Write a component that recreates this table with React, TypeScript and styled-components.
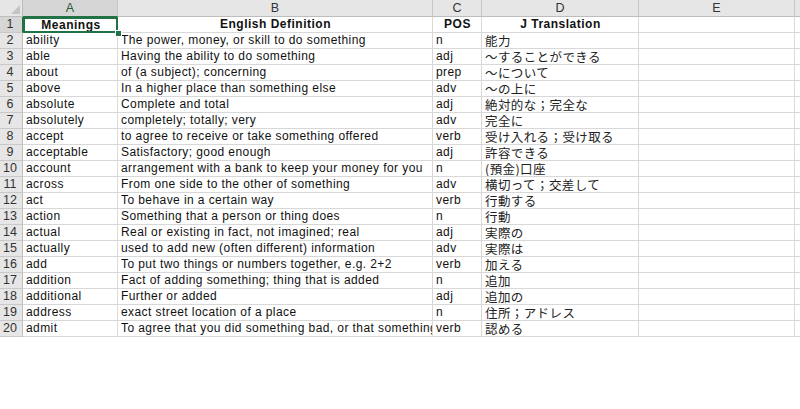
import React from "react";
import styled, { createGlobalStyle, css } from "styled-components";

const Global = createGlobalStyle`
  html, body { margin: 0; padding: 0; background: #ffffff; }
  body { font-family: "Liberation Sans", "Noto Sans CJK JP", sans-serif; }
`;

const COLS = [
  { key: "A", width: 95 },
  { key: "B", width: 315 },
  { key: "C", width: 49 },
  { key: "D", width: 157 },
  { key: "E", width: 156 },
  { key: "F", width: 60 },
];

const rows: [string, string, string, string][] = [
  ["ability", "The power, money, or skill to do something", "n", "能力"],
  ["able", "Having the ability to do something", "adj", "～することができる"],
  ["about", "of (a subject); concerning", "prep", "～について"],
  ["above", "In a higher place than something else", "adv", "～の上に"],
  ["absolute", "Complete and total", "adj", "絶対的な；完全な"],
  ["absolutely", "completely; totally; very", "adv", "完全に"],
  ["accept", "to agree to receive or take something offered", "verb", "受け入れる；受け取る"],
  ["acceptable", "Satisfactory; good enough", "adj", "許容できる"],
  ["account", "arrangement with a bank to keep your money for you", "n", "(預金)口座"],
  ["across", "From one side to the other of something", "adv", "横切って；交差して"],
  ["act", "To behave in a certain way", "verb", "行動する"],
  ["action", "Something that a person or thing does", "n", "行動"],
  ["actual", "Real or existing in fact, not imagined; real", "adj", "実際の"],
  ["actually", "used to add new (often different) information", "adv", "実際は"],
  ["add", "To put two things or numbers together, e.g. 2+2", "verb", "加える"],
  ["addition", "Fact of adding something; thing that is added", "n", "追加"],
  ["additional", "Further or added", "adj", "追加の"],
  ["address", "exact street location of a place", "n", "住所；アドレス"],
  ["admit", "To agree that you did something bad, or that something is true", "verb", "認める"],
];

const Sheet = styled.div`
  width: 800px;
  height: 409px;
  overflow: hidden;
  background: #fff;
`;

const Grid = styled.div`
  display: grid;
  grid-template-columns: 23px ${COLS.map((c) => `${c.width}px`).join(" ")};
  grid-template-rows: 17px repeat(20, 16px);
  width: max-content;
`;

const Corner = styled.div`
  position: relative;
  background: #e6e6e6;
  border-right: 1px solid #bdbdbd;
  border-bottom: 1px solid #bdbdbd;
  box-sizing: border-box;
  &::after {
    content: "";
    position: absolute;
    right: 2px;
    bottom: 2px;
    width: 0;
    height: 0;
    border-left: 9px solid transparent;
    border-bottom: 9px solid #c4c4c4;
  }
`;

const ColHead = styled.div<{ $sel?: boolean }>`
  box-sizing: border-box;
  background: ${(p) => (p.$sel ? "#d6d6d6" : "#e6e6e6")};
  border-right: 1px solid #c6c6c6;
  border-bottom: 1px solid ${(p) => (p.$sel ? "#217346" : "#bdbdbd")};
  display: flex;
  align-items: flex-end;
  justify-content: center;
  font-family: "Liberation Sans", sans-serif;
  font-size: 12.5px;
  line-height: 15px;
  color: ${(p) => (p.$sel ? "#2a5a3c" : "#333")};
`;

const RowHead = styled.div<{ $sel?: boolean }>`
  box-sizing: border-box;
  background: ${(p) => (p.$sel ? "#d6d6d6" : "#e6e6e6")};
  border-right: 1px solid ${(p) => (p.$sel ? "#217346" : "#bdbdbd")};
  border-bottom: 1px solid #c9c9c9;
  display: flex;
  align-items: flex-end;
  justify-content: center;
  font-family: "Liberation Sans", sans-serif;
  font-size: 12.5px;
  line-height: 15px;
  color: #333;
  padding-right: 2px;
`;

const Cell = styled.div<{ $bold?: boolean; $center?: boolean; $jp?: boolean }>`
  position: relative;
  box-sizing: border-box;
  border-right: 1px solid #d8d8d8;
  border-bottom: 1px solid #d8d8d8;
  padding: 0 2px 0 3px;
  white-space: nowrap;
  overflow: hidden;
  display: flex;
  align-items: flex-end;
  justify-content: ${(p) => (p.$center ? "center" : "flex-start")};
  font-family: "Liberation Sans", "Noto Sans CJK JP", sans-serif;
  font-size: 12px;
  line-height: 15px;
  letter-spacing: 0.42px;
  color: #111;
  ${(p) =>
    p.$bold &&
    css`
      font-weight: bold;
      letter-spacing: 0.5px;
    `}
  ${(p) =>
    p.$jp &&
    css`
      font-family: "Noto Sans CJK JP", sans-serif;
      font-size: 12.5px;
      line-height: 15px;
      letter-spacing: 0.4px;
      color: #222;
    `}
`;

const SelectedCell = styled(Cell)`
  overflow: visible;
  border: none;
  outline: 2px solid #217346;
  outline-offset: -2px;
  &::after {
    content: "";
    position: absolute;
    right: -4px;
    bottom: -4px;
    width: 5px;
    height: 5px;
    background: #217346;
    border: 1px solid #fff;
    z-index: 2;
  }
`;

const Filler = styled.div`
  border-right: 1px solid #d8d8d8;
  border-bottom: 1px solid #d8d8d8;
  box-sizing: border-box;
`;

export default function App() {
  return (
    <Sheet>
      <Global />
      <Grid>
        <Corner />
        {COLS.map((c) => (
          <ColHead key={c.key} $sel={c.key === "A"}>
            {c.key}
          </ColHead>
        ))}
        <RowHead $sel>1</RowHead>
        <SelectedCell $bold $center>
          Meanings
        </SelectedCell>
        <Cell $bold $center>English Definition</Cell>
        <Cell $bold $center>POS</Cell>
        <Cell $bold $center>J Translation</Cell>
        <Filler />
        <Filler />
        {rows.map((r, i) => (
          <React.Fragment key={i}>
            <RowHead>{i + 2}</RowHead>
            <Cell>{r[0]}</Cell>
            <Cell>{r[1]}</Cell>
            <Cell>{r[2]}</Cell>
            <Cell $jp>{r[3]}</Cell>
            <Filler />
            <Filler />
          </React.Fragment>
        ))}
      </Grid>
    </Sheet>
  );
}
